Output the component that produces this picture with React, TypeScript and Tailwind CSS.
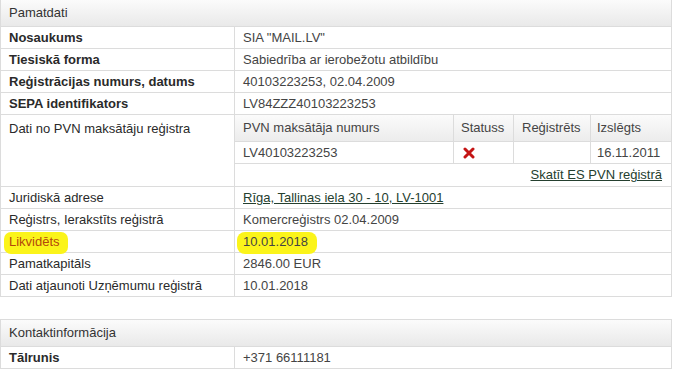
import type { ReactNode } from 'react'

const font = { fontFamily: '"Liberation Sans", Arial, sans-serif' }

function SectionHeader({ title }: { title: string }) {
  return (
    <div className="h-[26px] flex items-center px-2 bg-gradient-to-b from-[#fbfbfb] to-[#e9e9e9] text-[#333]">
      {title}
    </div>
  )
}

function Row({
  label,
  children,
  strong,
  highlight,
}: {
  label: ReactNode
  children: ReactNode
  strong?: boolean
  highlight?: boolean
}) {
  return (
    <div className="flex h-[22px] border-t border-[#dcdcdc]">
      <div
        className={
          'relative w-[234px] shrink-0 border-r border-[#dcdcdc] px-2 flex items-center ' +
          (strong ? 'font-semibold text-[#2a2a2a]' : 'text-[#2a2a2a]')
        }
      >
        {highlight && (
          <span className="absolute left-[3px] top-[1px] w-[64px] h-[22px] rounded-[7px] bg-[#fbf41a]" />
        )}
        <span className={'relative ' + (highlight ? 'text-[#b3470c]' : '')}>{label}</span>
      </div>
      <div className="relative flex-1 px-2 flex items-center text-[#444]">
        {highlight && (
          <span className="absolute left-[2px] top-[1px] w-[80px] h-[22px] rounded-[8px] bg-[#fbf41a]" />
        )}
        <span className="relative">{children}</span>
      </div>
    </div>
  )
}

function RedX() {
  return (
    <svg width="12" height="12" viewBox="0 0 12 12">
      <path d="M2 2 L10 10 M10 2 L2 10" stroke="#c41515" strokeWidth="3" strokeLinecap="round" />
    </svg>
  )
}

function PvnRow() {
  return (
    <div className="flex border-t border-[#dcdcdc]">
      <div className="w-[234px] shrink-0 border-r border-[#dcdcdc] px-2 pt-[4px] text-[#2a2a2a]">
        Dati no PVN maksātāju reģistra
      </div>
      <div className="flex-1 text-[#444]">
        <div className="grid grid-cols-[219px_60px_77px_1fr] h-[27px] bg-gradient-to-b from-[#fbfbfb] to-[#ececec] border-b border-[#dcdcdc]">
          <div className="px-2 flex items-center border-r border-[#dcdcdc]">PVN maksātāja numurs</div>
          <div className="px-[7px] flex items-center border-r border-[#dcdcdc]">Statuss</div>
          <div className="px-2 flex items-center border-r border-[#dcdcdc]">Reģistrēts</div>
          <div className="px-[6px] flex items-center">Izslēgts</div>
        </div>
        <div className="grid grid-cols-[219px_60px_77px_1fr] h-[22px] border-b border-[#dcdcdc]">
          <div className="px-2 flex items-center border-r border-[#dcdcdc]">LV40103223253</div>
          <div className="pl-[9px] flex items-center border-r border-[#dcdcdc]">
            <RedX />
          </div>
          <div className="border-r border-[#dcdcdc]" />
          <div className="px-[6px] flex items-center">16.11.2011</div>
        </div>
        <div className="h-[22px] flex items-center justify-end px-[9px]">
          <span className="underline text-[#25402f]">Skatīt ES PVN reģistrā</span>
        </div>
      </div>
    </div>
  )
}

export default function App() {
  return (
    <div className="bg-white w-[678px] h-[372px] text-[13px]" style={font}>
      <div className="w-[672px] border border-[#dcdcdc] border-t-0">
        <SectionHeader title="Pamatdati" />
        <Row label="Nosaukums" strong>SIA "MAIL.LV"</Row>
        <Row label="Tiesiskā forma" strong>Sabiedrība ar ierobežotu atbildību</Row>
        <Row label="Reģistrācijas numurs, datums" strong>40103223253, 02.04.2009</Row>
        <Row label="SEPA identifikators" strong>LV84ZZZ40103223253</Row>
        <PvnRow />
        <Row label="Juridiskā adrese">
          <span className="underline text-[#25402f]">Rīga, Tallinas iela 30 - 10, LV-1001</span>
        </Row>
        <Row label="Reģistrs, Ierakstīts reģistrā">Komercreģistrs 02.04.2009</Row>
        <Row label="Likvidēts" highlight>10.01.2018</Row>
        <Row label="Pamatkapitāls">2846.00 EUR</Row>
        <Row label="Dati atjaunoti Uzņēmumu reģistrā">10.01.2018</Row>
      </div>

      <div className="w-[672px] mt-[22px] border border-[#dcdcdc]">
        <SectionHeader title="Kontaktinformācija" />
        <Row label="Tālrunis" strong>+371 66111181</Row>
      </div>
    </div>
  )
}
